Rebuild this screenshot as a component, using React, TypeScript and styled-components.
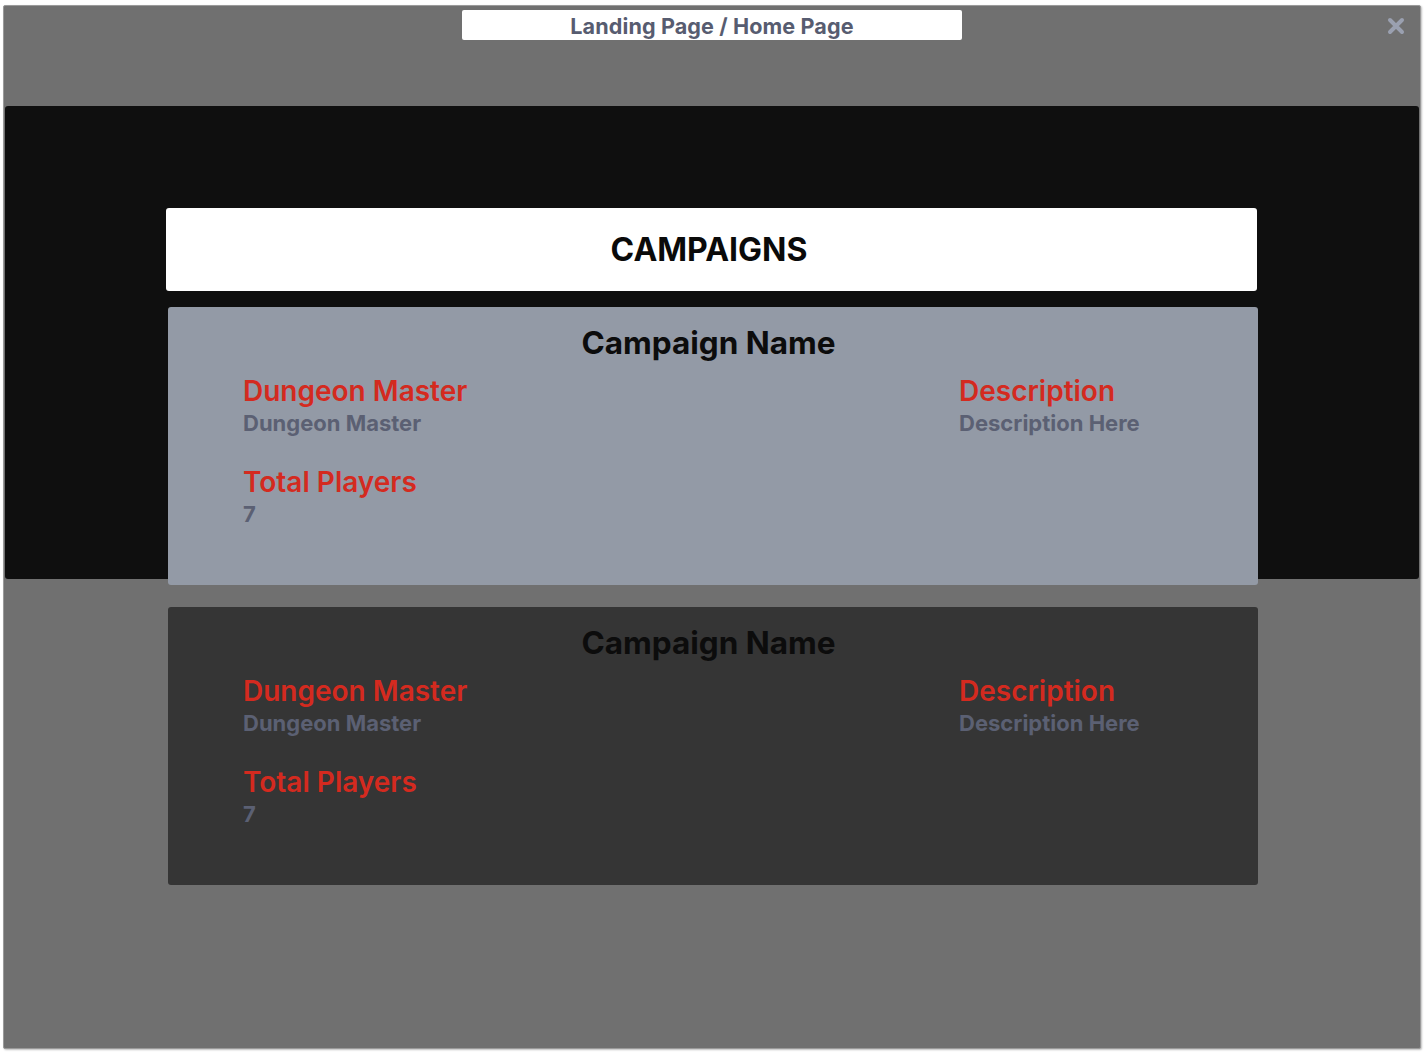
import React from "react";
import styled, { createGlobalStyle } from "styled-components";

const GlobalStyle = createGlobalStyle`
  html, body { margin: 0; padding: 0; background: #ffffff; }
  body { font-family: Inter, "Noto Sans", sans-serif; }
  * { box-sizing: border-box; }
`;

const Page = styled.div`
  padding: 5px 5px 5px 3px;
  width: 1426px;
  height: 1054px;
`;

const Frame = styled.div`
  width: 1418px;
  height: 1044px;
  background: #707070;
  border: 1px solid #9a9a9a;
  border-radius: 2px;
  box-shadow: 1px 1px 2px rgba(0, 0, 0, 0.25);
  display: flex;
  flex-direction: column;
`;

const TopBar = styled.div`
  position: relative;
  height: 100px;
  display: flex;
  justify-content: center;
  padding-top: 4px;
`;

const TitleBox = styled.div`
  width: 500px;
  height: 30px;
  background: #ffffff;
  border-radius: 2px;
  display: flex;
  align-items: center;
  justify-content: center;
  padding-top: 2px;
  color: #575c70;
  font-size: 21.6px;
  font-weight: 700;
  letter-spacing: 0.1px;
`;

const Close = styled.span`
  position: absolute;
  right: 14px;
  top: 10px;
  width: 20px;
  height: 20px;
  display: flex;
  align-items: center;
  justify-content: center;
`;

const Hero = styled.div`
  margin: 0 1px;
  height: 473px;
  background: #0f0f0f;
  border-radius: 3px;
`;

const Column = styled.div`
  width: 1092px;
  margin: -371px auto 0;
  display: flex;
  flex-direction: column;
`;

const Header = styled.div`
  width: 1091px;
  height: 83px;
  background: #ffffff;
  border-radius: 3px;
  display: flex;
  align-items: center;
  justify-content: center;
  padding-right: 5px;
  color: #0a0a0a;
  font-size: 32px;
  font-weight: 700;
  margin-bottom: 16px;
`;

const Card = styled.div<{ $dark?: boolean }>`
  width: 1090px;
  height: 278px;
  margin-left: 2px;
  margin-bottom: 22px;
  border-radius: 3px;
  background: ${(p) => (p.$dark ? "#353535" : "#939aa6")};
  padding: 16px 0 0 75px;
`;

const CardTitle = styled.div`
  margin-left: -75px;
  padding-right: 9px;
  text-align: center;
  font-size: 31.5px;
  font-weight: 700;
  line-height: 40px;
  color: #0c0c0c;
  margin-bottom: 12px;
`;

const Grid = styled.div`
  display: grid;
  grid-template-columns: 716px 1fr;
  row-gap: 27px;
`;

const Field = styled.div`
  display: flex;
  flex-direction: column;
`;

const Label = styled.div`
  color: #d42a1f;
  font-size: 28px;
  font-weight: 600;
  line-height: 32px;
`;

const Value = styled.div`
  color: #5b6073;
  font-size: 22px;
  font-weight: 700;
  line-height: 32px;
`;

const CampaignCard = ({ dark }: { dark?: boolean }) => (
  <Card $dark={dark}>
    <CardTitle>Campaign Name</CardTitle>
    <Grid>
      <Field>
        <Label>Dungeon Master</Label>
        <Value>Dungeon Master</Value>
      </Field>
      <Field>
        <Label>Description</Label>
        <Value>Description Here</Value>
      </Field>
      <Field>
        <Label>Total Players</Label>
        <Value>7</Value>
      </Field>
    </Grid>
  </Card>
);

export default function App() {
  return (
    <>
      <GlobalStyle />
      <Page>
        <Frame>
          <TopBar>
            <TitleBox>Landing Page / Home Page</TitleBox>
            <Close>
              <svg width="18" height="18" viewBox="0 0 18 18">
                <path d="M3 3 L15 15 M15 3 L3 15" stroke="#9aa0b0" strokeWidth="4" strokeLinecap="round" />
              </svg>
            </Close>
          </TopBar>
          <Hero />
          <Column>
            <Header>CAMPAIGNS</Header>
            <CampaignCard />
            <CampaignCard dark />
          </Column>
        </Frame>
      </Page>
    </>
  );
}
